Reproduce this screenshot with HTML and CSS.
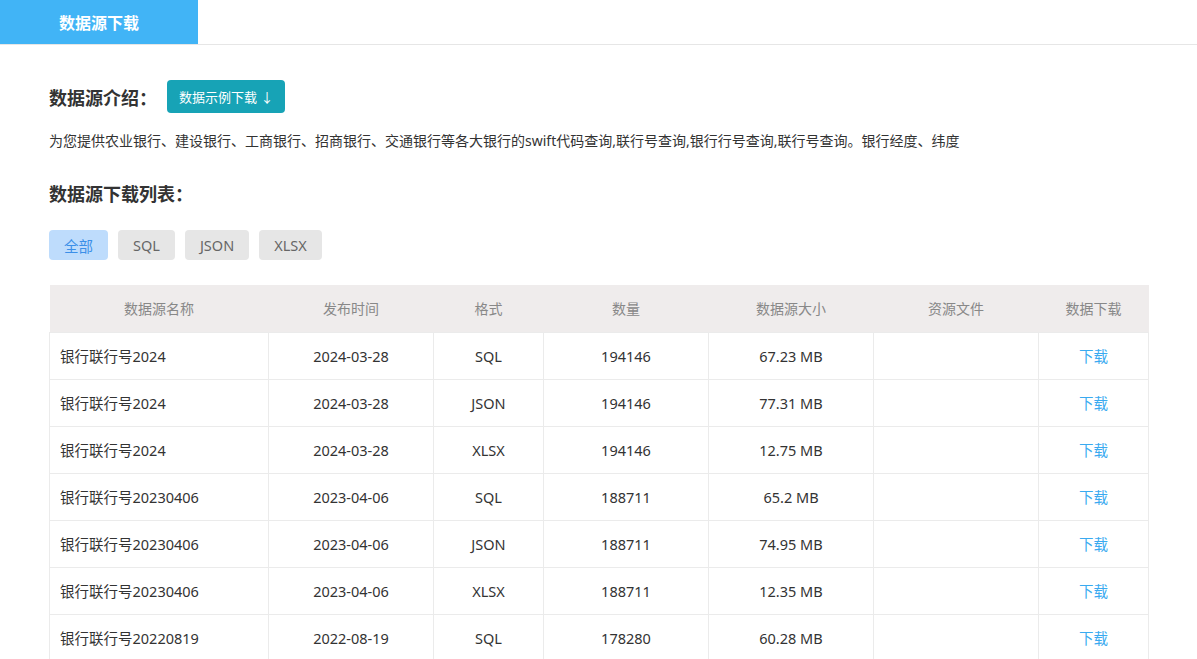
FILE: index.html
```html
<!DOCTYPE html>
<html lang="zh-CN">
<head>
<meta charset="utf-8">
<title>数据源下载</title>
<link rel="stylesheet" href="styles.css">
</head>
<body>
<div class="tabbar">
  <div class="tab">数据源下载</div>
</div>
<main class="content">
  <div class="intro-head">
    <h2 class="title">数据源介绍：</h2>
    <a class="sample-btn">数据示例下载 ↓</a>
  </div>
  <p class="desc">为您提供农业银行、建设银行、工商银行、招商银行、交通银行等各大银行的swift代码查询,联行号查询,银行行号查询,联行号查询。银行经度、纬度</p>
  <h2 class="title list-title">数据源下载列表：</h2>
  <div class="filters">
    <span class="chip active">全部</span>
    <span class="chip">SQL</span>
    <span class="chip">JSON</span>
    <span class="chip">XLSX</span>
  </div>
  <table class="data">
    <colgroup>
      <col class="c1"><col class="c2"><col class="c3"><col class="c4"><col class="c5"><col class="c6"><col class="c7">
    </colgroup>
    <thead>
      <tr><th>数据源名称</th><th>发布时间</th><th>格式</th><th>数量</th><th>数据源大小</th><th>资源文件</th><th>数据下载</th></tr>
    </thead>
    <tbody>
      <tr><td class="name">银行联行号2024</td><td>2024-03-28</td><td>SQL</td><td>194146</td><td>67.23 MB</td><td></td><td><a class="dl">下载</a></td></tr>
      <tr><td class="name">银行联行号2024</td><td>2024-03-28</td><td>JSON</td><td>194146</td><td>77.31 MB</td><td></td><td><a class="dl">下载</a></td></tr>
      <tr><td class="name">银行联行号2024</td><td>2024-03-28</td><td>XLSX</td><td>194146</td><td>12.75 MB</td><td></td><td><a class="dl">下载</a></td></tr>
      <tr><td class="name">银行联行号20230406</td><td>2023-04-06</td><td>SQL</td><td>188711</td><td>65.2 MB</td><td></td><td><a class="dl">下载</a></td></tr>
      <tr><td class="name">银行联行号20230406</td><td>2023-04-06</td><td>JSON</td><td>188711</td><td>74.95 MB</td><td></td><td><a class="dl">下载</a></td></tr>
      <tr><td class="name">银行联行号20230406</td><td>2023-04-06</td><td>XLSX</td><td>188711</td><td>12.35 MB</td><td></td><td><a class="dl">下载</a></td></tr>
      <tr><td class="name">银行联行号20220819</td><td>2022-08-19</td><td>SQL</td><td>178280</td><td>60.28 MB</td><td></td><td><a class="dl">下载</a></td></tr>
    </tbody>
  </table>
</main>
</body>
</html>
```
FILE: styles.css
```css
* { box-sizing: border-box; }
html, body { margin: 0; padding: 0; background: #fff; }
body {
  font-family: "Noto Sans", "Noto Sans CJK SC", sans-serif;
  color: #333;
  font-size: 14px;
}
.tabbar {
  height: 45px;
  border-bottom: 1px solid #e6e6e6;
  display: flex;
}
.tabbar .tab {
  width: 198px;
  height: 44px;
  background: #41b4f6;
  color: #fff;
  font-weight: bold;
  font-size: 16px;
  display: flex;
  align-items: center;
  justify-content: center;
}
.content {
  padding: 35px 49px 0 49px;
}
.intro-head {
  display: flex;
  align-items: center;
  gap: 10px;
  height: 33px;
}
.title {
  margin: 0;
  font-size: 18px;
  font-weight: bold;
  color: #333;
}
.sample-btn {
  display: inline-flex;
  align-items: center;
  height: 33px;
  padding: 0 12px;
  background: #17a3b6;
  color: #fff;
  border-radius: 4px;
  font-size: 13px;
}
.desc {
  margin: 18px 0 0 0;
  font-size: 14px;
  line-height: 20px;
  color: #333;
}
.list-title {
  margin-top: 31px;
  line-height: 24px;
}
.filters {
  display: flex;
  gap: 10px;
  margin-top: 24px;
}
.chip {
  height: 30px;
  padding: 0 15px;
  display: inline-flex;
  align-items: center;
  background: #e6e6e6;
  color: #666;
  border-radius: 4px;
  font-size: 14.5px;
}
.chip.active {
  background: #bedcfc;
  color: #3b8fe8;
}
.data {
  margin-top: 25px;
  width: 1100px;
  border-collapse: collapse;
  table-layout: fixed;
}
.c1 { width: 219px; }
.c2 { width: 165px; }
.c3 { width: 110px; }
.c4 { width: 165px; }
.c5 { width: 165px; }
.c6 { width: 165px; }
.c7 { width: 110px; }
.data th {
  height: 47px;
  background: #efecec;
  color: #888;
  font-weight: normal;
  font-size: 14px;
  text-align: center;
}
.data td {
  height: 47px;
  border: 1px solid #ebebeb;
  text-align: center;
  font-size: 14.5px;
  color: #333;
}
.data td.name {
  text-align: left;
  padding-left: 10px;
}
.dl {
  color: #3aaaf0;
}
```
